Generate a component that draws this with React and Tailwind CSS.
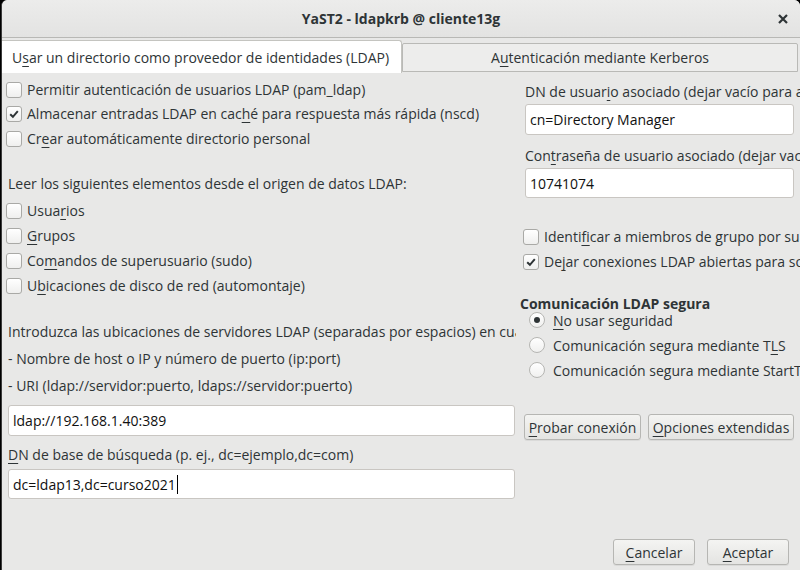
import React from 'react';

const ink = 'text-[#2e3436]';

const Mn = ({ children }) => <span className="underline underline-offset-[3px] decoration-1">{children}</span>;

const Check = ({ checked }) => (
    <span className="w-[16px] h-[16px] shrink-0 rounded-[3px] border border-[#a9a9a6] bg-gradient-to-b from-[#ffffff] to-[#efefee] flex items-center justify-center">
        {checked && (
            <svg width="10" height="10" viewBox="0 0 10 10">
                <path d="M1.2 5.2 L3.9 7.8 L8.8 2.2" fill="none" stroke="#2e3436" strokeWidth="2" />
            </svg>
        )}
    </span>
);

const Radio = ({ checked }) => (
    <span className="w-[16px] h-[16px] shrink-0 rounded-full border border-[#b6b6b3] bg-gradient-to-b from-[#ffffff] to-[#f0f0ef] flex items-center justify-center">
        {checked && <span className="w-[6px] h-[6px] rounded-full bg-[#2e3436]" />}
    </span>
);

const CheckRow = ({ checked, children, className = '' }) => (
    <div className={`h-[25px] flex items-center gap-[5px] whitespace-nowrap ${className}`}>
        <Check checked={checked} />
        <span>{children}</span>
    </div>
);

const Button = ({ children, className = '' }) => (
    <button className={`h-[26px] rounded-[3px] border border-[#b6b6b3] bg-gradient-to-b from-[#f4f4f2] to-[#e4e4e2] shadow-[0_1px_0_rgba(0,0,0,0.06)] flex items-center justify-center whitespace-nowrap ${ink} ${className}`}>
        {children}
    </button>
);

const Field = ({ value, className = '', caret }) => (
    <div className={`rounded-[3px] border border-[#c9c6c2] bg-white flex items-center pl-[4px] text-[#101010] whitespace-nowrap ${className}`}>
        {value}
        {caret && <span className="w-px h-[19px] bg-black ml-px" />}
    </div>
);

const App = () => {
    return (
        <div className="w-[800px] h-[570px] bg-black overflow-hidden text-[14px] font-['Open_Sans',sans-serif]">
            <div className="h-full ml-px rounded-t-[6px] bg-[#e8e8e7] border-l border-[#3b3b3b] flex flex-col">
                {/* title bar */}
                <div className="h-[38px] shrink-0 rounded-t-[6px] bg-gradient-to-b from-[#ececeb] to-[#e3e3e2] border-b border-[#b8b8b5] relative flex items-center justify-center">
                    <span className={`font-bold text-[14px] ${ink}`}>YaST2 - ldapkrb @ cliente13g</span>
                    <span className="absolute right-[11px] top-[13px]">
                        <svg width="12" height="12" viewBox="0 0 12 12">
                            <path d="M2 2 L10 10 M10 2 L2 10" stroke="#2e3436" strokeWidth="2.2" />
                        </svg>
                    </span>
                </div>

                {/* tabs */}
                <div className="h-[35px] shrink-0 flex items-end bg-[#e8e8e7]">
                    <div className={`h-[33px] w-[400px] bg-white border-r border-t border-[#c4c4c0] rounded-tr-[3px] flex items-center pl-[10px] ${ink}`}>
                        <span>U<Mn>s</Mn>ar un directorio como proveedor de identidades (LDAP)</span>
                    </div>
                    <div className={`h-[29px] flex-1 mb-px mr-[2px] bg-[#ededec] border border-[#b9b9b6] rounded-t-[2px] flex items-center justify-center ${ink}`}>
                        <span>A<Mn>u</Mn>tenticación mediante Kerberos</span>
                    </div>
                </div>

                {/* content */}
                <div className={`flex-1 flex ${ink}`}>
                    {/* left column */}
                    <div className="w-[514px] shrink-0 overflow-hidden pl-[4px] pt-[4px] flex flex-col">
                        <CheckRow>Permitir autenticación de usuarios LDAP (pam_ldap)</CheckRow>
                        <CheckRow checked className="-mt-px">Almacenar entradas LDAP en cac<Mn>h</Mn>é para respuesta más rápida (nscd)</CheckRow>
                        <CheckRow>Cr<Mn>e</Mn>ar automáticamente directorio personal</CheckRow>

                        <div className="h-[25px] mt-[20px] flex items-center pl-[2px] whitespace-nowrap">
                            Leer los siguientes elementos desde el origen de datos LDAP:
                        </div>
                        <div className="mt-[2px] flex flex-col">
                            <CheckRow className="h-[24.7px]">Usua<Mn>r</Mn>ios</CheckRow>
                            <CheckRow className="h-[24.7px]"><Mn>G</Mn>rupos</CheckRow>
                            <CheckRow className="h-[24.7px]">Co<Mn>m</Mn>andos de superusuario (sudo)</CheckRow>
                            <CheckRow className="h-[24.7px]">U<Mn>b</Mn>icaciones de disco de red (automontaje)</CheckRow>
                        </div>

                        <div className="mt-[20px] pl-[2px] flex flex-col whitespace-nowrap">
                            <div className="h-[27px] flex items-center">Introduzca las ubicaciones de servidores LDAP (separadas por espacios) en cualquiera de estos formatos:</div>
                            <div className="h-[27px] flex items-center">- Nombre de host o IP y número de puerto (ip:port)</div>
                            <div className="h-[27px] flex items-center">- URI (ldap://servidor:puerto, ldaps://servidor:puerto)</div>
                        </div>
                        <Field value="ldap://192.168.1.40:389" className="mt-[6px] ml-[2px] h-[31px] w-[507px]" />
                        <div className="h-[28px] mt-[4px] pl-[2px] flex items-center whitespace-nowrap">
                            <span><Mn>D</Mn>N de base de búsqueda (p. ej., dc=ejemplo,dc=com)</span>
                        </div>
                        <Field value="dc=ldap13,dc=curso2021" caret className="mt-[1px] ml-[2px] h-[30px] w-[507px]" />
                    </div>

                    {/* right column */}
                    <div className="flex-1 overflow-hidden pl-[4px] pt-[5px] flex flex-col">
                        <div className="h-[26px] pl-[5px] flex items-center whitespace-nowrap">
                            <span>DN de usuar<Mn>i</Mn>o asociado (dejar vacío para acceso anónimo)</span>
                        </div>
                        <Field value="cn=Directory Manager" className="ml-[5px] h-[31px] w-[269px]" />
                        <div className="h-[26px] mt-[7px] pl-[5px] flex items-center whitespace-nowrap">
                            <span>Con<Mn>t</Mn>raseña de usuario asociado (dejar vacío para acceso anónimo)</span>
                        </div>
                        <Field value="10741074" className="ml-[5px] h-[30px] w-[269px]" />

                        <div className="mt-[26px] pl-[3px] flex flex-col">
                            <CheckRow>Identi<Mn>f</Mn>icar a miembros de grupo por su nombre distintivo (DN)</CheckRow>
                            <CheckRow checked>De<Mn>j</Mn>ar conexiones LDAP abiertas para solicitudes consecutivas</CheckRow>
                        </div>

                        <div className="mt-[22px] h-[15px] flex items-center font-bold whitespace-nowrap">Comunicación LDAP segura</div>
                        <div className="pl-[9px] -mt-px flex flex-col gap-[5px]">
                            <div className="h-[20px] flex items-center gap-[8px] whitespace-nowrap">
                                <Radio checked /><span><Mn>N</Mn>o usar seguridad</span>
                            </div>
                            <div className="h-[20px] flex items-center gap-[8px] whitespace-nowrap">
                                <Radio /><span>Comunicación segura mediante T<Mn>L</Mn>S</span>
                            </div>
                            <div className="h-[20px] flex items-center gap-[8px] whitespace-nowrap">
                                <Radio /><span>Comunicación segura mediante StartTLS</span>
                            </div>
                        </div>

                        <div className="mt-[34px] pl-[4px] flex gap-[7px]">
                            <Button className="w-[117px]"><span><Mn>P</Mn>robar conexión</span></Button>
                            <Button className="w-[146px]"><span><Mn>O</Mn>pciones extendidas</span></Button>
                        </div>

                        <div className="mt-auto mb-[5px] flex justify-end gap-[12px] pr-[11px]">
                            <Button className="w-[82px]"><span><Mn>C</Mn>ancelar</span></Button>
                            <Button className="w-[82px]"><span><Mn>A</Mn>ceptar</span></Button>
                        </div>
                    </div>
                </div>
            </div>
        </div>
    );
};

export default App;
